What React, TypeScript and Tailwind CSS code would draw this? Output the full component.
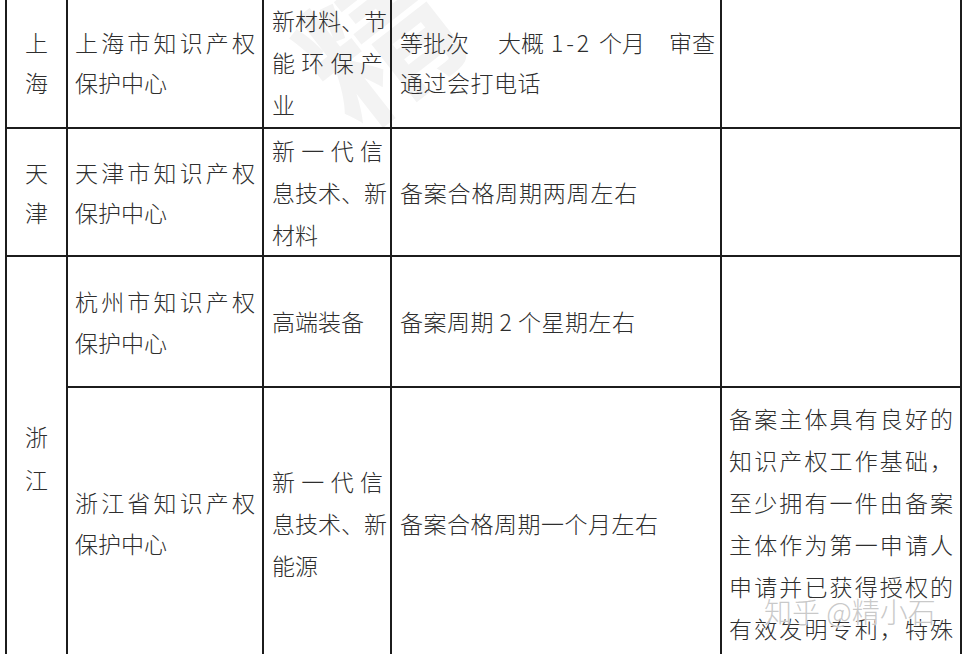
import React from "react";

// justified line: spreads glyphs across a fixed width, like Word's distributed lines
function JLine({ text, width }: { text: string; width: string }) {
  return (
    <div className={`flex justify-between ${width}`}>
      {Array.from(text).map((ch, i) => (
        <span key={i}>{ch}</span>
      ))}
    </div>
  );
}

const cell =
  "border-r-2 border-b-2 border-[#1c1c1c] flex items-center overflow-hidden";

export default function App() {
  return (
    <div
      className="relative w-full h-[654px] overflow-hidden bg-white text-[#2e2e2e] text-[23px] font-light"
      style={{ fontFamily: '"Noto Sans CJK SC", "Noto Sans", sans-serif' }}
    >
      {/* faint stamp watermark behind the table */}
      <div className="absolute left-[300px] top-[-40px] z-0 text-[150px] font-bold text-[#f3f3f3] rotate-[-38deg] select-none leading-none">
        精
      </div>

      <div className="relative z-10 ml-[5px] -mt-[4px] w-[957px] border-l-2 border-[#1c1c1c] grid grid-cols-[61px_196px_128px_330px_240px] grid-rows-[133px_128px_131px_272px]">
        {/* 上海 */}
        <div className={`${cell} justify-center leading-[40px] text-center`}>
          <div>
            上<br />海
          </div>
        </div>
        <div className={`${cell} pl-[7px] leading-[40px]`}>
          <div>
            <JLine text="上海市知识产权" width="w-[180px]" />
            <div>保护中心</div>
          </div>
        </div>
        <div className={`${cell} pl-[8px] leading-[42px]`}>
          <div>
            <JLine text="新材料、节" width="w-[111px]" />
            <JLine text="能环保产" width="w-[111px]" />
            <div>业</div>
          </div>
        </div>
        <div className={`${cell} pl-[8px] leading-[40px]`}>
          <div className="shrink-0 whitespace-nowrap">
            <div className="flex whitespace-nowrap">
              <span className="shrink-0">等批次</span>
              <span className="shrink-0 ml-[29px]">大概</span>
              <span className="shrink-0 ml-[7px] w-[38px] flex justify-between">
                <span>1</span>
                <span>-</span>
                <span>2</span>
              </span>
              <span className="shrink-0 ml-[10px]">个月</span>
              <span className="shrink-0 ml-[24px]">审查</span>
            </div>
            <div className="tracking-[0.5px]">通过会打电话</div>
          </div>
        </div>
        <div className={cell}></div>

        {/* 天津 */}
        <div className={`${cell} justify-center leading-[40px] text-center`}>
          <div>
            天<br />津
          </div>
        </div>
        <div className={`${cell} pl-[7px] leading-[40px]`}>
          <div>
            <JLine text="天津市知识产权" width="w-[180px]" />
            <div>保护中心</div>
          </div>
        </div>
        <div className={`${cell} pl-[8px] leading-[42px]`}>
          <div>
            <JLine text="新一代信" width="w-[111px]" />
            <JLine text="息技术、新" width="w-[111px]" />
            <div>材料</div>
          </div>
        </div>
        <div className={`${cell} pl-[8px] tracking-[0.8px]`}>
          备案合格周期两周左右
        </div>
        <div className={cell}></div>

        {/* 浙江 */}
        <div
          className={`${cell} row-span-2 justify-center leading-[43px] text-center`}
        >
          <div>
            浙<br />江
          </div>
        </div>
        <div className={`${cell} pl-[7px] leading-[41px]`}>
          <div>
            <JLine text="杭州市知识产权" width="w-[180px]" />
            <div>保护中心</div>
          </div>
        </div>
        <div className={`${cell} pl-[8px]`}>高端装备</div>
        <div className={`${cell} pl-[8px] tracking-[0.5px]`}>
          备案周期 2 个星期左右
        </div>
        <div className={cell}></div>

        <div className={`${cell} pl-[7px] leading-[41px]`}>
          <div>
            <JLine text="浙江省知识产权" width="w-[180px]" />
            <div>保护中心</div>
          </div>
        </div>
        <div className={`${cell} pl-[8px] leading-[42px]`}>
          <div>
            <JLine text="新一代信" width="w-[111px]" />
            <JLine text="息技术、新" width="w-[111px]" />
            <div>能源</div>
          </div>
        </div>
        <div className={`${cell} pl-[8px] tracking-[0.5px]`}>
          备案合格周期一个月左右
        </div>
        <div className={`${cell} pl-[7px] leading-[42px]`}>
          <div>
            <JLine text="备案主体具有良好的" width="w-[224px]" />
            <JLine text="知识产权工作基础，" width="w-[224px]" />
            <JLine text="至少拥有一件由备案" width="w-[224px]" />
            <JLine text="主体作为第一申请人" width="w-[224px]" />
            <JLine text="申请并已获得授权的" width="w-[224px]" />
            <JLine text="有效发明专利，特殊" width="w-[224px]" />
          </div>
        </div>
      </div>

      {/* site watermark over the text */}
      <div
        className="absolute left-[764px] top-[597px] z-20 text-[28px] leading-none text-[#b8b8b8]/75 select-none"
        style={{ textShadow: "0 0 2px #ffffff, 0 0 1px #ffffff" }}
      >
        知乎 @精小石
      </div>
    </div>
  );
}
